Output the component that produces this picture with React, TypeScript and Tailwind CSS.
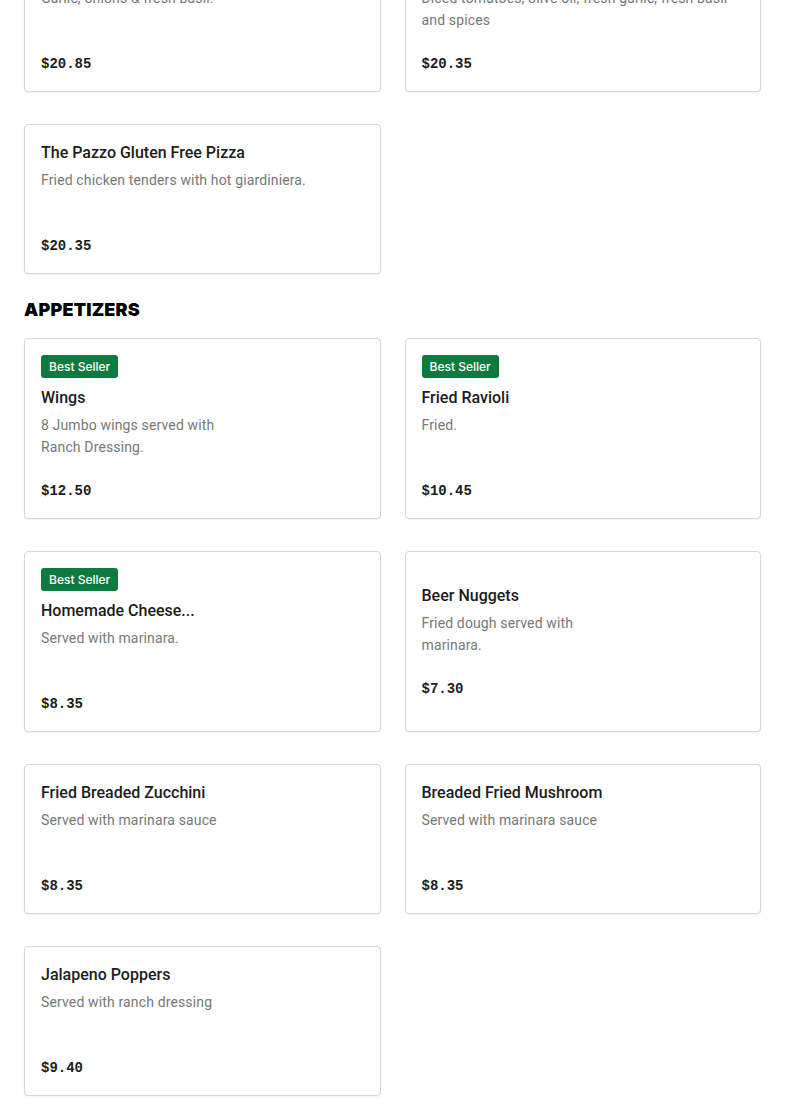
type Item = {
  name: string;
  description: string;
  price: string;
  bestSeller?: boolean;
  narrow?: boolean;
};

const pizzas: Item[] = [
  { name: "Margherita Pizza", description: "Garlic, onions & fresh basil.", price: "$20.85" },
  {
    name: "Bruschetta Pizza",
    description: "Diced tomatoes, olive oil, fresh garlic, fresh basil and spices",
    price: "$20.35",
  },
  {
    name: "The Pazzo Gluten Free Pizza",
    description: "Fried chicken tenders with hot giardiniera.",
    price: "$20.35",
  },
];

const appetizers: Item[] = [
  { name: "Wings", description: "8 Jumbo wings served with Ranch Dressing.", price: "$12.50", bestSeller: true, narrow: true },
  { name: "Fried Ravioli", description: "Fried.", price: "$10.45", bestSeller: true },
  { name: "Homemade Cheese...", description: "Served with marinara.", price: "$8.35", bestSeller: true },
  { name: "Beer Nuggets", description: "Fried dough served with marinara.", price: "$7.30", narrow: true },
  { name: "Fried Breaded Zucchini", description: "Served with marinara sauce", price: "$8.35" },
  { name: "Breaded Fried Mushroom", description: "Served with marinara sauce", price: "$8.35" },
  { name: "Jalapeno Poppers", description: "Served with ranch dressing", price: "$9.40" },
];

const MenuCard = ({ item }: { item: Item }) => (
  <div className="flex flex-col justify-center rounded-[4px] border border-[#d6d6d6] bg-white px-4 pt-4 pb-[15px] shadow-[0_1px_2px_rgba(0,0,0,0.06)]">
    {item.bestSeller && (
      <div className="mb-[8px] flex">
        <span className="flex h-[23px] items-center rounded-[3px] bg-[#0f7a40] px-2 font-['Inter',sans-serif] text-[12px] font-medium text-white">
          Best Seller
        </span>
      </div>
    )}
    <h3 className="h-6 text-[16px] leading-6 font-medium text-[#1c1c1c]">{item.name}</h3>
    <p
      className={`mt-1 h-11 text-[14px] leading-[22px] tracking-[0.01em] text-[#777777] ${
        item.narrow ? "max-w-[190px]" : ""
      }`}
    >
      {item.description}
    </p>
    <div className="mt-[21px] h-6 font-['Liberation_Mono',monospace] text-[14px] leading-6 font-bold text-[#1c1c1c]">
      {item.price}
    </div>
  </div>
);

export default function App() {
  return (
    <div className="min-h-[1101px] overflow-hidden bg-white px-6 font-['Roboto',sans-serif]">
      <div className="-mt-[58px] grid grid-cols-2 gap-x-6 gap-y-8">
        {pizzas.map((item) => (
          <MenuCard key={item.name} item={item} />
        ))}
      </div>
      <h2 className="mt-6 mb-[16px] h-6 font-['Inter',sans-serif] text-[18px] leading-6 font-black tracking-[0.01em] text-black uppercase">
        Appetizers
      </h2>
      <div className="grid grid-cols-2 gap-x-6 gap-y-8 pb-8">
        {appetizers.map((item) => (
          <MenuCard key={item.name} item={item} />
        ))}
      </div>
    </div>
  );
}
